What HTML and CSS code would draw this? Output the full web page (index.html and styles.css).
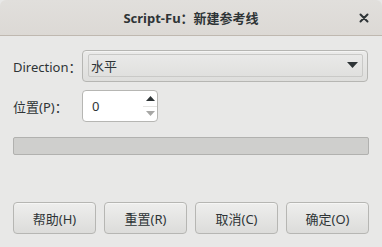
FILE: index.html
```html
<!DOCTYPE html>
<html lang="zh-CN">
<head>
  <meta charset="UTF-8">
  <title>Script-Fu：新建参考线</title>
  <link rel="stylesheet" href="styles.css">
</head>
<body>
  <div class="dialog">
    <div class="titlebar">
      <span class="title">Script-Fu：新建参考线</span>
      <span class="close">
        <svg width="10" height="10" viewBox="0 0 10 10"><path d="M1.5 1.5 L8.5 8.5 M8.5 1.5 L1.5 8.5" stroke="#2e3436" stroke-width="2" stroke-linecap="round"/></svg>
      </span>
    </div>

    <div class="content">
      <div class="form">
        <label class="label">Direction：</label>
        <div class="combo">
          <div class="combo-inner">
            <span>水平</span>
            <svg width="11" height="7" viewBox="0 0 11 7"><path d="M0 0 H11 L5.5 6 Z" fill="#2e3436"/></svg>
          </div>
        </div>

        <label class="label">位置(P)：</label>
        <div class="spin">
          <span class="spin-value">0</span>
          <div class="spin-buttons">
            <div class="spin-up"><svg width="9" height="5" viewBox="0 0 9 5"><path d="M0 5 L4.5 0 L9 5 Z" fill="#2e3436"/></svg></div>
            <div class="spin-down"><svg width="9" height="5" viewBox="0 0 9 5"><path d="M0 0 H9 L4.5 5 Z" fill="#a7a7a5"/></svg></div>
          </div>
        </div>
      </div>

      <div class="progress"></div>

      <div class="buttons">
        <button class="btn">帮助(H)</button>
        <button class="btn">重置(R)</button>
        <button class="btn">取消(C)</button>
        <button class="btn">确定(O)</button>
      </div>
    </div>
  </div>
</body>
</html>
```

FILE: styles.css
```css
body {
  margin: 0;
  padding: 0;
  background: #e8e8e7;
  font-family: "Noto Sans", "Noto Sans CJK SC", sans-serif;
  font-size: 13px;
  color: #2e3436;
}

.dialog {
  width: 382px;
  height: 247px;
  display: flex;
  flex-direction: column;
  background: #e8e8e7;
}

.titlebar {
  height: 35px;
  border-bottom: 1px solid #bfb8b0;
  border-radius: 6px 6px 0 0;
  background: linear-gradient(#e1dfdc, #dcd9d5);
  position: relative;
  display: flex;
  justify-content: center;
  align-items: center;
}

.title {
  font-weight: bold;
  font-size: 13px;
  color: #2e3436;
}

.close {
  position: absolute;
  right: 13px;
  top: 13px;
  width: 10px;
  height: 10px;
  display: flex;
}

.content {
  padding: 14px 13px 13px 13px;
  display: flex;
  flex-direction: column;
  flex: 1;
}

.form {
  display: grid;
  grid-template-columns: 69px 1fr;
  row-gap: 8px;
  align-items: center;
}

.label {
  white-space: nowrap;
}

.combo {
  height: 32px;
  width: 286px;
  box-sizing: border-box;
  border: 1px solid #b6b6b3;
  border-radius: 4px;
  background: linear-gradient(#ebebea, #dededc);
  padding: 3px 4px 4px 5px;
  box-shadow: inset 0 1px 0 #f4f4f3;
}

.combo-inner {
  height: 100%;
  box-sizing: border-box;
  border: 1px solid #c9c9c7;
  border-radius: 2px;
  display: flex;
  align-items: center;
  justify-content: space-between;
  padding: 0 4px 0 2px;
}

.spin {
  width: 76px;
  height: 32px;
  box-sizing: border-box;
  border: 1px solid #b6b6b3;
  border-radius: 4px;
  background: #ffffff;
  display: flex;
  align-items: center;
}

.spin-value {
  flex: 1;
  padding-left: 9px;
}

.spin-buttons {
  width: 14px;
  height: 100%;
  display: flex;
  flex-direction: column;
}

.spin-up,
.spin-down {
  flex: 1;
  display: flex;
  justify-content: center;
  align-items: center;
}

.spin-down {
  border-top: 1px solid #e4e4e2;
}

.progress {
  margin-top: 15px;
  height: 18px;
  box-sizing: border-box;
  border: 1px solid #b1b1af;
  border-radius: 2px;
  background: #cfcfcd;
}

.buttons {
  margin-top: auto;
  display: flex;
  gap: 8px;
}

.btn {
  flex: 1;
  height: 32px;
  font-family: inherit;
  font-size: 13px;
  color: #2e3436;
  border: 1px solid #b6b6b3;
  border-radius: 4px;
  background: linear-gradient(#eeeeed, #dcdcda);
  box-shadow: inset 0 1px 0 #f6f6f5;
  padding: 0;
}
```
